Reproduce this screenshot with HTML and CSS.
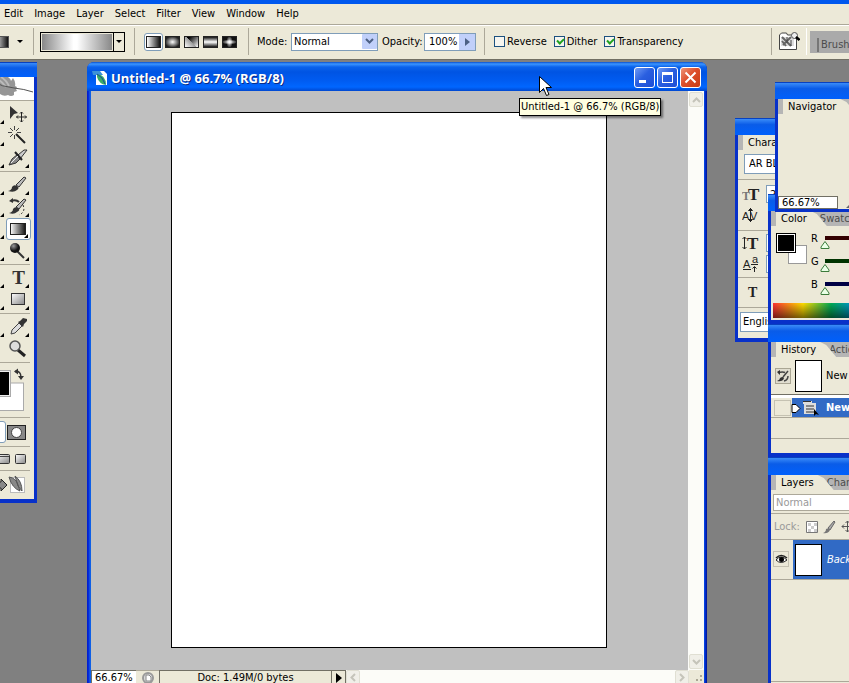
FILE: index.html
```html
<!DOCTYPE html>
<html lang="en">
<head>
<meta charset="utf-8">
<title>Untitled-1 @ 66.7% (RGB/8)</title>
<link rel="stylesheet" href="styles.css">
</head>
<body>
<svg class="defs" aria-hidden="true">
  <defs>
    <linearGradient id="g-bw"><stop offset="0" stop-color="#fff"/><stop offset="1" stop-color="#111"/></linearGradient>
    <linearGradient id="g-metal" x2="1" y2="1"><stop offset="0" stop-color="#fff"/><stop offset="1" stop-color="#888"/></linearGradient>
    <radialGradient id="g-ball" cx=".35" cy=".3"><stop offset="0" stop-color="#999"/><stop offset="1" stop-color="#111"/></radialGradient>
  </defs>
</svg>
<nav class="menubar">
  <button>Edit</button><button>Image</button><button>Layer</button><button>Select</button><button>Filter</button><button>View</button><button>Window</button><button>Help</button>
</nav>
<header class="options">
  <div class="group g-tool">
    <span class="tool-swatch"></span>
    <svg width="7" height="4" viewBox="0 0 7 4"><path d="M0 0h6L3 3z"/></svg>
  </div>
  <div class="group g-picker">
    <button class="picker" aria-label="Gradient picker"><span class="picker-ramp"></span><span class="picker-arrow"><svg width="7" height="4" viewBox="0 0 7 4"><path d="M0 0h6L3 3z"/></svg></span></button>
  </div>
  <div class="group g-types">
    <button class="type on" aria-label="Linear"><span class="ramp linear"></span></button>
    <button class="type" aria-label="Radial"><span class="ramp radial"></span></button>
    <button class="type" aria-label="Angle"><span class="ramp angle"></span></button>
    <button class="type" aria-label="Reflected"><span class="ramp reflected"></span></button>
    <button class="type" aria-label="Diamond"><span class="ramp diamond"></span></button>
  </div>
  <div class="group g-mode">
    <label class="l-mode" for="mode">Mode:</label>
    <span class="combo">
      <select id="mode"><option>Normal</option></select>
      <svg class="combo-arrow" width="15" height="15" viewBox="0 0 15 15"><rect width="15" height="15" rx="1" fill="#c1d0fa"/><path d="M4 5l3.500 3.500L11 5" fill="none" stroke="#4d6185" stroke-width="2"/></svg>
    </span>
    <label class="l-opacity" for="opacity">Opacity:</label>
    <span class="spin"><input id="opacity" value="100%"><button aria-label="Opacity slider"><svg width="5" height="8" viewBox="0 0 5 8"><path d="M0 0l5 4-5 4z" fill="#4d6185"/></svg></button></span>
  </div>
  <div class="group g-checks">
    <label><input type="checkbox">Reverse</label>
    <label><input type="checkbox" checked>Dither</label>
    <label><input type="checkbox" checked>Transparency</label>
  </div>
  <div class="group g-browse">
    <svg width="22" height="19" viewBox="0 0 22 19"><path d="M1.500 17.500V3l2-2h5l1 2h9v14.500z" fill="#fff" stroke="#444"/><path d="M3 5h13v9H3z" fill="#ddd"/><path d="M4 5l9 9M5 13l8-8M4 9l4 5" stroke="#666" stroke-width="2"/><path d="M9 5v6M13 8v6" stroke="#444"/><circle cx="16.500" cy="3.500" r="3" fill="#eee" stroke="#555"/><path d="M18 5l3.500 3" stroke="#000" stroke-width="2.500"/></svg>
  </div>
  <div class="well"><button>Brushes</button></div>
</header>
<main class="workspace">

  <section class="win toolbox">
    <div class="bar"></div>
    <svg class="feather" width="54" height="23" viewBox="-20 0 54 23"><rect x="-20" width="54" height="23" fill="#fff"/><path d="M-20 0h28q3 2 3 4l2-3q3 4 2 8l2 1-1 2 1 2-3 1v3q-3 2-6 0-4 2-8-1-6-1-12-8h-8z" fill="#969696"/><path d="M-6 1q6 1 12 9M1 0q5 3 8 9" stroke="#bbb" fill="none" stroke-width="2"/><path d="M-8 4q10 6 22 7 10 1 19 4" fill="none" stroke="#555"/></svg>
    <div class="tools">
      <button class="tool" aria-label="Marquee"></button>
      <button class="tool none" aria-label="Move"><svg viewBox="0 0 24 22"><path d="M4 3v13l4-5 4-1z" fill="#333"/><path d="M15.500 9v10M10.500 14h10M14 10.500l1.500-1.500 1.500 1.500M14 17.500l1.500 1.500 1.500-1.500M12 12.500L10.500 14l1.500 1.500M19 12.500l1.500 1.500-1.500 1.500" stroke="#222" fill="none"/></svg></button>
      <button class="tool" aria-label="Lasso"></button>
      <button class="tool none" aria-label="Magic Wand"><svg viewBox="0 0 24 22"><path d="M10 9l9 9" stroke="#222" stroke-width="2"/><path d="M8.500 1v4M8.500 10v4M2 7.500h4M11 7.500h4M4 3l3 3M13 3l-3 3M4 12l3-3" stroke="#444"/></svg></button>
      <button class="tool" aria-label="Crop"></button>
      <button class="tool" aria-label="Slice"><svg viewBox="0 0 24 22"><path d="M3 18l3-6 6-5 2 5-4 4z" fill="#888" stroke="#333"/><path d="M12 8l6-5h3l-7 9z" fill="#ccc" stroke="#333"/><path d="M9 5l7 8" stroke="#222" stroke-width="2"/><path d="M5 16l7-7" stroke="#eee"/></svg></button>
    </div>
    <div class="tools">
      <button class="tool" aria-label="Healing Brush"></button>
      <button class="tool" aria-label="Brush"><svg viewBox="0 0 24 22"><path d="M10 11l8-8 2 1-7 9z" fill="#bbb" stroke="#333"/><path d="M2 17q4-1 4-4 2-3 5-1t0 4q-3 3-9 1z" fill="#333"/></svg></button>
      <button class="tool" aria-label="Clone Stamp"></button>
      <button class="tool" aria-label="History Brush"><svg viewBox="0 0 24 22"><path d="M10 11l8-8 2 1-7 9z" fill="#bbb" stroke="#333"/><path d="M5 5q5-2 8 1" stroke="#333" stroke-width="2" fill="none"/><path d="M3 5l4-3v5zM3 17q4-1 4-4 2-3 5-1t-1 4q-3 3-8 1z" fill="#333"/><path d="M17 9q3 7-4 10" fill="none" stroke="#333" stroke-dasharray="2 2"/></svg></button>
      <button class="tool" aria-label="Eraser"></button>
      <button class="tool on" aria-label="Gradient"><svg viewBox="0 0 24 22"><rect x="4.500" y="5.500" width="15" height="11" fill="url(#g-bw)" stroke="#222"/></svg></button>
      <button class="tool" aria-label="Blur"></button>
      <button class="tool" aria-label="Burn"><svg viewBox="0 0 24 22"><path d="M11 11l7 7" stroke="#333" stroke-width="2"/><circle cx="9" cy="8" r="5" fill="url(#g-ball)"/></svg></button>
    </div>
    <div class="tools">
      <button class="tool" aria-label="Path Selection"></button>
      <button class="tool letter" aria-label="Type">T</button>
      <button class="tool" aria-label="Pen"></button>
      <button class="tool" aria-label="Rectangle"><svg viewBox="0 0 24 22"><rect x="5.500" y="4.500" width="13" height="11" fill="url(#g-metal)" stroke="#333"/></svg></button>
    </div>
    <div class="tools">
      <button class="tool" aria-label="Notes"></button>
      <button class="tool" aria-label="Eyedropper"><svg viewBox="0 0 24 22"><path d="M5 18l1-4 7-7 3 3-7 7z" fill="#ddd" stroke="#444"/><path d="M12 6l2-1 3-3 4 1v2l-3 3-1 3z" fill="#333"/></svg></button>
      <button class="tool none" aria-label="Hand"></button>
      <button class="tool none" aria-label="Zoom"><svg viewBox="0 0 24 22"><path d="M12 12l7 6" stroke="#222" stroke-width="3"/><circle cx="9" cy="8" r="5" fill="#ddd" stroke="#555" stroke-width="1.500"/></svg></button>
    </div>
    <div class="tools colors">
      <svg width="54" height="54" viewBox="-20 0 54 54"><rect x="-5" y="20" width="28.500" height="27.500" fill="#fff" stroke="#aaa"/><rect x="-17.500" y="7.500" width="28" height="26" fill="#eee" stroke="#aaa"/><rect x="-16" y="9" width="25" height="23"/><path d="M15 8.500q6-1 6 6" stroke="#333" stroke-width="1.500" fill="none"/><path d="M14 8.500l4-3v6zM21 17l-3-4h6z" fill="#333"/></svg>
    </div>
    <div class="tools mask">
      <button class="tool on none" aria-label="Standard Mode"></button>
      <button class="tool none" aria-label="Quick Mask"><svg viewBox="0 0 24 22"><rect x="1.500" y="4.500" width="18" height="14" fill="#888" stroke="#222"/><circle cx="10.500" cy="11.500" r="5" fill="#fff" stroke="#444"/></svg></button>
    </div>
    <div class="tools screens">
      <svg width="54" height="20" viewBox="-20 0 54 20"><rect x="-3.500" y="5.500" width="13" height="9" rx="1" fill="url(#g-metal)" stroke="#333"/><path d="M-3 7.500H9" stroke="#444"/><rect x="15.500" y="5.500" width="10" height="9" rx="1" fill="url(#g-metal)" stroke="#333"/></svg>
    </div>
    <div class="tools jump">
      <svg width="54" height="25" viewBox="-20 0 54 25"><path d="M-6 11h7V8l6 6-6 6v-3h-7z" fill="#888" stroke="#222"/><rect x="10.500" y="6.500" width="14" height="15" fill="#fff" stroke="#bbb"/><path d="M9 6q7 1 9 8l2 6q-8-3-11-14zM15 5q7 5 7 15l-4-5z" fill="#888" stroke="#555"/></svg>
    </div>
  </section>

  <section class="doc">
    <div class="titlebar">
      <svg width="16" height="16" viewBox="0 0 16 16"><path d="M4 1h8l3 3v11H4z" fill="#fff"/><path d="M0 1h8l3 4H1z" fill="#3c91d8"/><path d="M5 4q9 1 9 11-7-1-9-8z" fill="#3cab65"/><path d="M5 4q6 3 8 10" stroke="#164e9c" fill="none"/></svg>
      <h1>Untitled-1 @ 66.7% (RGB/8)</h1>
      <button class="cap" aria-label="Minimize"><svg viewBox="0 0 19 19"><path d="M4 12h7v3H4z" fill="#fff"/></svg></button>
      <button class="cap" aria-label="Maximize"><svg viewBox="0 0 19 19"><path d="M4 4h11v11H4zM5 7v7h9V7z" fill="#fff" fill-rule="evenodd"/></svg></button>
      <button class="cap close" aria-label="Close"><svg viewBox="0 0 19 19"><path d="M4.500 4.500l10 10M14.500 4.500l-10 10" stroke="#fff" stroke-width="2"/></svg></button>
    </div>
    <div class="docbody">
      <div class="canvas"><div class="paper"></div></div>
      <div class="vscroll">
        <button aria-label="Scroll up"><svg width="9" height="6" viewBox="0 0 9 6"><path d="M1 5l3.500-3.500L8 5" /></svg></button>
        <button aria-label="Scroll down"><svg width="9" height="6" viewBox="0 0 9 6"><path d="M1 1l3.500 3.500L8 1"/></svg></button>
      </div>
    </div>
    <div class="status">
      <input class="zoom" aria-label="Zoom" value="66.67%">
      <span class="vc"><svg width="12" height="12" viewBox="0 0 12 12"><circle cx="6" cy="6" r="5" fill="#ddd" stroke="#999" stroke-width="2"/><path d="M4 9V3h3l2 2v4z" fill="#fff" stroke="#888"/></svg></span>
      <span class="info">Doc: 1.49M/0 bytes</span>
      <button class="more" aria-label="Status options"><svg width="6" height="10" viewBox="0 0 6 10"><path d="M0 0l6 5-6 5z"/></svg></button>
      <div class="hscroll">
        <button aria-label="Scroll left"><svg width="6" height="9" viewBox="0 0 6 9"><path d="M5 1L1.500 4.500 5 8"/></svg></button>
        <button aria-label="Scroll right"><svg width="6" height="9" viewBox="0 0 6 9"><path d="M1 1l3.500 3.500L1 8"/></svg></button>
      </div>
      <svg class="grip" width="15" height="14" viewBox="0 0 15 14"><path d="M11 5h2v2h-2zM11 9h2v2h-2zM7 9h2v2H7zM11 13h2v1h-2zM7 13h2v1H7zM3 13h2v1H3z" fill="#aaa694"/></svg>
    </div>
  </section>

  <section class="win character">
    <div class="bar"></div>
    <div class="tabs"><h2 class="tab">Character</h2></div>
    <div class="ch-font"><select aria-label="Font"><option>AR BLANCA</option></select></div>
    <div class="ch-rows">
      <div class="ch-row"><svg width="18" height="18" viewBox="0 0 18 18"><text x="0" y="15" class="glyph small">T</text><text x="6" y="15" class="glyph">T</text></svg><input aria-label="Size" value="24 pt"></div>
      <div class="ch-row"><svg width="18" height="18" viewBox="0 0 18 18"><text x="0" y="14" class="glyph sans">A</text><text x="8" y="14" class="glyph sans">V</text><path d="M8.500 2v14M6.500 4.500h4l-2-2zM6.500 13.500h4l-2 2z" stroke="#222" fill="none"/></svg></div>
    </div>
    <div class="ch-rows lower">
      <div class="ch-row"><svg width="18" height="18" viewBox="0 0 18 18"><text x="5" y="15" class="glyph">T</text><path d="M2.500 3v12M.5 5l2-2 2 2M.5 13l2 2 2-2" stroke="#222" fill="none"/></svg><input aria-label="Vertical scale" value="100%"></div>
      <div class="ch-row"><svg width="18" height="18" viewBox="0 0 18 18"><text x="1" y="13" class="glyph sans">A</text><text x="10" y="8" class="glyph sans">a</text><path d="M1 14.500h8M9 9.500h7M12.500 17v-5M10.500 13.500l2-2 2 2" stroke="#222" fill="none"/></svg><input aria-label="Baseline" value="0 pt"></div>
    </div>
    <div class="ch-style"><button>T</button></div>
    <div class="ch-lang"><select aria-label="Language"><option>English: USA</option></select></div>
  </section>

  <section class="win color">
    <div class="bar"></div>
    <div class="tabs"><h2 class="tab">Color</h2><button class="tab-off">Swatches</button></div>
    <div class="color-body">
      <svg width="33" height="34" viewBox="0 0 33 34"><rect x="12.500" y="13.500" width="18" height="18" fill="#fff" stroke="#999"/><rect x=".5" y="1.500" width="19" height="19" fill="#fff" stroke="#000"/><rect x="2" y="3" width="16" height="16"/></svg>
      <div class="channels">
        <div class="channel"><span>R</span><svg width="80" height="16" viewBox="0 0 80 16"><path d="M5 2h75v4H5z" fill="#300"/><path d="M5 7.500l4 5.500v1.500H1V13z" fill="#e9ffe6" stroke="#3b7b3b"/></svg></div>
        <div class="channel"><span>G</span><svg width="80" height="16" viewBox="0 0 80 16"><path d="M5 2h75v4H5z" fill="#030"/><path d="M5 7.500l4 5.500v1.500H1V13z" fill="#e9ffe6" stroke="#3b7b3b"/></svg></div>
        <div class="channel"><span>B</span><svg width="80" height="16" viewBox="0 0 80 16"><path d="M5 2h75v4H5z" fill="#004"/><path d="M5 7.500l4 5.500v1.500H1V13z" fill="#e9ffe6" stroke="#3b7b3b"/></svg></div>
      </div>
    </div>
    <div class="spectrum"></div>
  </section>

  <section class="win navigator">
    <div class="bar"></div>
    <div class="tabs"><h2 class="tab">Navigator</h2></div>
    <div class="nav-view"></div>
    <div class="nav-foot"><input aria-label="Navigator zoom" value="66.67%"><svg width="14" height="8" viewBox="0 0 14 8"><path d="M0 7l4-4 2 2 3-4 5 6z" fill="#666"/></svg></div>
  </section>

  <section class="win history">
    <div class="bar"></div>
    <div class="tabs"><h2 class="tab">History</h2><button class="tab-off">Actions</button></div>
    <div class="snapshot">
      <svg width="16" height="16" viewBox="0 0 16 16"><rect x=".5" y=".5" width="15" height="15" fill="#e0ddcf" stroke="#aaa694"/><path d="M8 9l5-6M3 4.500q5-1 7 0M13 8q0 4-4 5" stroke="#444" fill="none" stroke-width="1.500"/><path d="M2 4l3-2v5zM2 13q3-1 3-3 3-2 4 0-1 4-7 3z" fill="#333"/></svg>
      <span class="thumb"></span><span>New</span>
    </div>
    <div class="state">
      <span class="state-slot"></span>
      <svg width="30" height="16" viewBox="0 0 30 16"><path d="M1 4.500h4l4 4-4 4H1z" fill="#fff" stroke="#000"/><path d="M12 1h9v2h4v11H13V4h-1z" fill="#ddd"/><path d="M15 6h8M15 9h8M15 12h8M12 1.500h8" stroke="#333"/><path d="M23 9v7l2-2 3 1z"/></svg>
      <strong>New</strong>
    </div>
    <div class="state-empty"></div>
  </section>

  <section class="win layers">
    <div class="bar"></div>
    <div class="tabs"><h2 class="tab">Layers</h2><button class="tab-off">Channels</button></div>
    <div class="blend"><select aria-label="Blend mode" disabled><option>Normal</option></select></div>
    <div class="lock"><span>Lock:</span>
      <svg width="12" height="12" viewBox="0 0 12 12"><path d="M.5.500h11v11H.5z" fill="#fff" stroke="#777"/><path d="M2 2h3v3H2zM5 5h3v3H5zM8 2h3v3H8zM2 8h3v3H2zM8 8h3v3H8z" fill="#ccc"/></svg>
      <svg width="13" height="14" viewBox="0 0 13 14"><path d="M5 8l6-7 1 1-5 8z" fill="#aaa" stroke="#666"/><path d="M0 13q3-1 3-4 4-2 4 1-2 4-7 3z" fill="#777"/></svg>
      <svg width="13" height="13" viewBox="0 0 13 13"><path d="M6.500 1v11M1 6.500h11M4.500 3l2-2 2 2M4.500 10l2 2 2-2M3 4.500l-2 2 2 2M10 4.500l2 2-2 2" stroke="#555" fill="none"/></svg>
    </div>
    <div class="layer">
      <button class="eye" aria-label="Layer visibility"><svg width="13" height="10" viewBox="0 0 13 10"><path d="M1 6q5-6 11 0-6 5-11 0z" fill="#fff" stroke="#222"/><circle cx="6.500" cy="5.500" r="2.500"/><path d="M1 4q5-5 11 0" stroke="#222" fill="none" stroke-width="1.500"/></svg></button>
      <div class="layer-name"><span class="thumb"></span><em>Background</em></div>
    </div>
    <div class="layers-rest"></div>
    <div class="layers-foot"></div>
  </section>

  <div class="tooltip">Untitled-1 @ 66.7% (RGB/8)</div>
  <svg class="cursor" width="13" height="21" viewBox="0 0 13 21"><path d="M.5.500v16l4-4 3 7 2.500-1-3-7h5.500z" fill="#fff" stroke="#000"/></svg>
</main>
</body>
</html>
```
FILE: styles.css
```css
* { box-sizing: border-box; }
body {
  margin: 0;
  height: 100vh;
  display: flex;
  flex-direction: column;
  overflow: hidden;
  background: #808080;
  color: #000;
  font: 11px/14px "DejaVu Sans Condensed", "DejaVu Sans", sans-serif;
}
button, select, input { font: inherit; color: inherit; margin: 0; }
button { padding: 0; border: 0; background: none; }
select { appearance: none; border-radius: 0; }
svg { display: block; flex: none; }
.defs { position: absolute; width: 0; height: 0; }

/* Menu and options bars */
.menubar {
  flex: none;
  display: flex;
  gap: 11px;
  height: 25px;
  padding: 0 4px;
  border-top: 4px solid #0058ee;
  border-bottom: 1px solid #aca899;
  background: #ece9d8;
}
.options {
  flex: none;
  display: flex;
  height: 35px;
  border-top: 1px solid #fff;
  border-bottom: 1px solid #716f64;
  background: #ece9d8;
}
.group {
  display: flex;
  align-items: center;
  margin: 2px 0 4px;
  border-right: 1px solid #aca899;
}
.g-tool { width: 34px; gap: 8px; }
.tool-swatch { width: 9px; height: 12px; border: 1px solid #555; border-left: 0; background: linear-gradient(90deg, #999, #111); }
.g-picker { width: 101px; padding-left: 6px; }
.picker { display: flex; width: 85px; height: 20px; border: 1px solid #000; background: #ece9d8; }
.picker-ramp { flex: 1; margin: 1px; background: linear-gradient(90deg, #888, #fff 45%, #fff 50%, #888); }
.picker-arrow { display: grid; place-items: center; width: 11px; height: 100%; border-left: 1px solid #000; }
.g-types { width: 114px; padding-left: 9px; }
.type { display: grid; place-items: center; width: 19px; height: 18px; }
.type.on { border: 1px solid #7f9db9; border-radius: 3px; background: #fff; }
.ramp { width: 15px; height: 12px; border: 1px solid #222; }
.linear { background: linear-gradient(90deg, #fff, #111); }
.radial { background: radial-gradient(#fff, #222 80%); }
.angle { background: linear-gradient(45deg, #fff, #999 50%, transparent 51%), linear-gradient(135deg, #000 20%, #fff); }
.reflected { background: linear-gradient(#111, #fff, #111); }
.diamond { background: radial-gradient(ellipse 60% 25%, #fff, transparent), radial-gradient(ellipse 25% 60%, #fff, transparent), #111; }
.g-mode { width: 236px; padding-left: 8px; }
.l-mode { width: 34px; white-space: nowrap; }
.combo { display: grid; width: 87px; margin-right: 4px; }
.combo > * { grid-area: 1 / 1; }
.combo select { width: 100%; height: 18px; padding: 0 2px; border: 1px solid #7f9db9; background: #fff; }
.combo-arrow { place-self: center end; margin-right: 1px; pointer-events: none; }
.l-opacity { width: 42px; white-space: nowrap; }
.spin { display: flex; width: 52px; height: 18px; border: 1px solid #7f9db9; background: #fff; }
.spin input { flex: 1; min-width: 0; padding: 0 0 0 4px; border: 0; background: none; }
.spin button { display: grid; place-items: center; width: 16px; background: #c1d0fa; }
.g-checks { flex: 1; padding-left: 9px; gap: 7px; }
.g-checks label { display: flex; align-items: center; gap: 2px; }
.g-checks input { appearance: none; width: 11px; height: 11px; border: 1px solid #1c5180; background: #f6f5f0; }
.g-checks input:checked::before { content: ""; display: block; width: 3px; height: 5px; margin: 0 3px; border: solid #21a121; border-width: 0 2px 2px 0; transform: rotate(45deg); }
.g-browse { width: 35px; padding-left: 6px; border-right-color: #fff; }
.well { width: 39px; margin: 5px 0 6px 3px; padding: 7px 0 0 7px; overflow: hidden; background: #aaa; }
.well button { padding: 0 2px; border-left: 2px solid #777; line-height: 14px; color: #4c4c4c; }

/* Windows float freely over the workspace */
.workspace { position: relative; flex: 1; min-height: 0; overflow: hidden; }
.win {
  position: absolute;
  display: flex;
  flex-direction: column;
  border: solid #0831c9;
  border-width: 0 3px 4px;
  background: #ece9d8;
}
.bar { flex: none; height: 17px; margin: 0 -3px; border-top: 1px solid #0841c0; background: linear-gradient(#3b8cf8, #0a5ce8 35%, #0060fc); }

.toolbox { left: -23px; top: 2px; width: 60px; }
.toolbox .bar { height: 15px; }
.feather { border-bottom: 1px solid #aca899; height: 24px; }
.tools { display: grid; grid-template-columns: 25px 25px; grid-auto-rows: 22px; margin-right: 4px; padding: 2px 0 2px 1px; border-bottom: 1px solid #aca899; }
.tool { position: relative; display: block; width: 25px; height: 22px; }
.tool svg { width: 24px; height: 22px; }
.tool:not(.none)::after { content: ""; position: absolute; right: 2px; bottom: 1px; width: 4px; height: 4px; background: #000; clip-path: polygon(100% 0, 100% 100%, 0 100%); }
.tool.on { border: 1px solid #7f9db9; border-radius: 3px; background: #fff; }
.tool.on svg { margin: -1px; }
.letter { font: bold 19px/22px "Liberation Serif", serif; color: #333; }
.tools.colors { display: block; height: 55px; padding: 0; }
.tools.mask { padding: 3px 0 3px 1px; }
.tools.screens, .tools.jump { display: block; padding: 2px 0 0; height: 24px; }
.tools.jump { height: 28px; padding: 0; border: 0; }

/* Document window */
.doc {
  position: absolute;
  left: 87px;
  right: 142px;
  top: 2px;
  bottom: -8px;
  display: flex;
  flex-direction: column;
  padding: 0 3px 0 4px;
  border-radius: 7px 7px 0 0;
  background: linear-gradient(90deg, #0019cf, #0831d9 2px, #166aee 3px, #0855dd 4px, #0855dd calc(100% - 3px), #0031dc calc(100% - 2px), #00138c);
}
.titlebar {
  flex: none;
  display: flex;
  align-items: center;
  gap: 2px;
  height: 29px;
  margin: 0 -3px 0 -4px;
  padding: 2px 6px 0 5px;
  border-radius: 7px 7px 0 0;
  background: linear-gradient(#0a50cf, #3b95ff 2px, #0a62ec 5px, #0054e3 10px, #005bf0 18px, #0066ff 25px, #0048d0);
}
.titlebar h1 { flex: 1; margin: 0; padding-left: 1px; font: bold 13px/16px "Open Sans", "Noto Sans", sans-serif; color: #fff; text-shadow: 1px 1px #0a2c87; white-space: nowrap; }
.cap { width: 21px; height: 21px; border: 1px solid #fff; border-radius: 3px; background: linear-gradient(135deg, #6f9bf5, #2a5fe0 45%, #1f4fd5); }
.cap svg { width: 19px; height: 19px; }
.cap.close { background: linear-gradient(135deg, #ee9478, #dd4f2c 45%, #c93c14); }
.docbody { flex: 1; min-height: 0; display: flex; }
.canvas { flex: 1; display: flex; padding: 21px 81px 22px 80px; background: #c0c0c0; }
.paper { flex: 1; border: 1px solid #000; background: #fff; }
.vscroll { display: flex; flex-direction: column; justify-content: space-between; width: 16px; padding: 1px; background: #fcfcf8; }
.vscroll button, .hscroll button { display: grid; place-items: center; width: 14px; height: 15px; border: 1px solid #e0dfd3; border-radius: 2px; background: #f0efe8; }
.vscroll path, .hscroll path { fill: none; stroke: #c5c4ba; stroke-width: 2; }
.status { flex: none; display: flex; height: 21px; padding-bottom: 7px; background: #ece9d8; }
.zoom { width: 45px; padding: 1px 3px 0; border: 1px solid #716f64; border-right: 0; border-bottom: 0; background: #fff; }
.vc { display: grid; place-items: center; width: 23px; border-top: 1px solid #aca899; }
.info { width: 173px; border: 1px solid #716f64; border-bottom: 0; text-align: center; line-height: 14px; }
.more { display: grid; place-items: center; width: 14px; border: solid #716f64; border-width: 1px 1px 0 0; }
.hscroll { flex: 1; display: flex; justify-content: space-between; background: #fcfcf8; }
.grip { background: #ece9d8; }

/* Palettes */
.tabs { flex: none; display: flex; height: 15px; padding-left: 5px; overflow: hidden; background: #b5b5b5; }
.tab { margin: 0; padding: 0 20px 0 5px; font-size: 11px; font-weight: normal; line-height: 15px; background: #ece9d8; clip-path: polygon(0 0, calc(100% - 16px) 0, calc(100% - 10px) 3px, 100% 100%, 0 100%); }
.tab-off { margin-left: -7px; color: #4c4c4c; }

.character { left: 735px; right: -60px; top: 58px; height: 224px; }
.ch-font { margin-top: 4px; padding: 0 0 5px 6px; }
.ch-font select, .ch-lang select { width: 100%; height: 20px; padding: 0 4px; border: 1px solid #7f9db9; background: #fff; }
.ch-font, .ch-rows, .ch-style { border-bottom: 1px solid #aca899; }
.ch-rows { height: 51px; padding: 5px 0 0 4px; }
.ch-rows.lower { height: 47px; padding-top: 3px; }
.ch-row { display: flex; gap: 6px; height: 21px; }
.ch-row input { height: 18px; width: 60px; border: 1px solid #7f9db9; background: #fff; padding: 0 3px; }
.glyph { font: bold 17px "Liberation Serif", serif; fill: #222; }
.glyph.small { font-size: 12px; fill: #777; }
.glyph.sans { font: 11px "Liberation Sans", sans-serif; }
.ch-style { height: 30px; padding: 6px 0 0 10px; }
.ch-style button { font: bold 14px/18px "Liberation Serif", serif; color: #222; }
.ch-lang { padding: 4px 0 0 2px; }
.ch-lang select { padding: 0 2px; }

.color { left: 768px; right: -60px; top: 134px; height: 130px; }
.color-body { display: flex; flex: 1; gap: 2px; padding: 6px 0 0 5px; }
.channel { display: flex; height: 23px; }
.channel span { width: 9px; }
.channel svg { margin-top: 2px; }
.spectrum { height: 15px; margin: 0 0 2px 2px; background: linear-gradient(transparent, rgb(0 0 0 / 55%)), linear-gradient(90deg, #f33 0, #fd0 30px, #0a5 58px, #09b 76px, #22c 100px, #c0c 130px); }

.navigator { left: 775px; right: -60px; top: 22px; height: 130px; border-bottom-width: 3px; }
.nav-view { flex: 1; }
.nav-foot { display: flex; gap: 8px; align-items: end; height: 13px; }
.nav-foot input { width: 60px; height: 13px; padding: 0 3px; border: 1px solid #716f64; background: #fff; }

.history { left: 768px; right: -60px; top: 264px; height: 133px; }
.history .bar, .layers .bar { height: 18px; }
.snapshot { display: flex; align-items: center; gap: 4px; height: 38px; padding-left: 4px; border-bottom: 1px solid #716f64; }
.thumb { flex: none; width: 27px; height: 32px; border: 1px solid #000; background: #fff; }
.state { display: flex; align-items: center; height: 23px; border-top: 3px solid #fff; border-bottom: 1px solid #aca899; color: #fff; background: linear-gradient(90deg, #ece9d8 21px, #316ac5 21px); }
.state-slot { width: 17px; height: 16px; margin: 0 0 0 3px; border: 1px solid #c5c2b2; }
.state strong { padding-left: 5px; }
.state-empty { height: 21px; border-bottom: 1px solid #aca899; }

.layers { left: 768px; right: -60px; top: 397px; bottom: -30px; }
.blend { padding: 4px 0 2px 2px; border-bottom: 1px solid #aca899; }
.blend select { width: 100%; height: 17px; padding: 0 2px; border: 1px solid #aca899; background: #fff; color: #999; opacity: 1; }
.lock { display: flex; align-items: center; gap: 5px; height: 26px; padding-left: 3px; color: #999; border-bottom: 1px solid #aca899; }
.lock span { width: 27px; }
.layer { display: flex; height: 40px; border-bottom: 1px solid #aca899; }
.eye { display: grid; place-items: center; width: 16px; height: 16px; margin: 11px 4px 0 2px; border: 1px solid #c5c2b2; }
.layer-name { flex: 1; display: flex; align-items: center; gap: 5px; padding-left: 2px; color: #fff; background: #316ac5; }
.layers-rest { flex: 1; border-bottom: 1px solid #aca899; }
.layers-foot { height: 27px; }

.tooltip { position: absolute; left: 519px; top: 38px; padding: 1px; border: 1px solid #000; background: #ffffe1; box-shadow: 2px 2px 2px rgb(0 0 0 / 45%); white-space: nowrap; }
.cursor { position: absolute; left: 539px; top: 16px; }
```
